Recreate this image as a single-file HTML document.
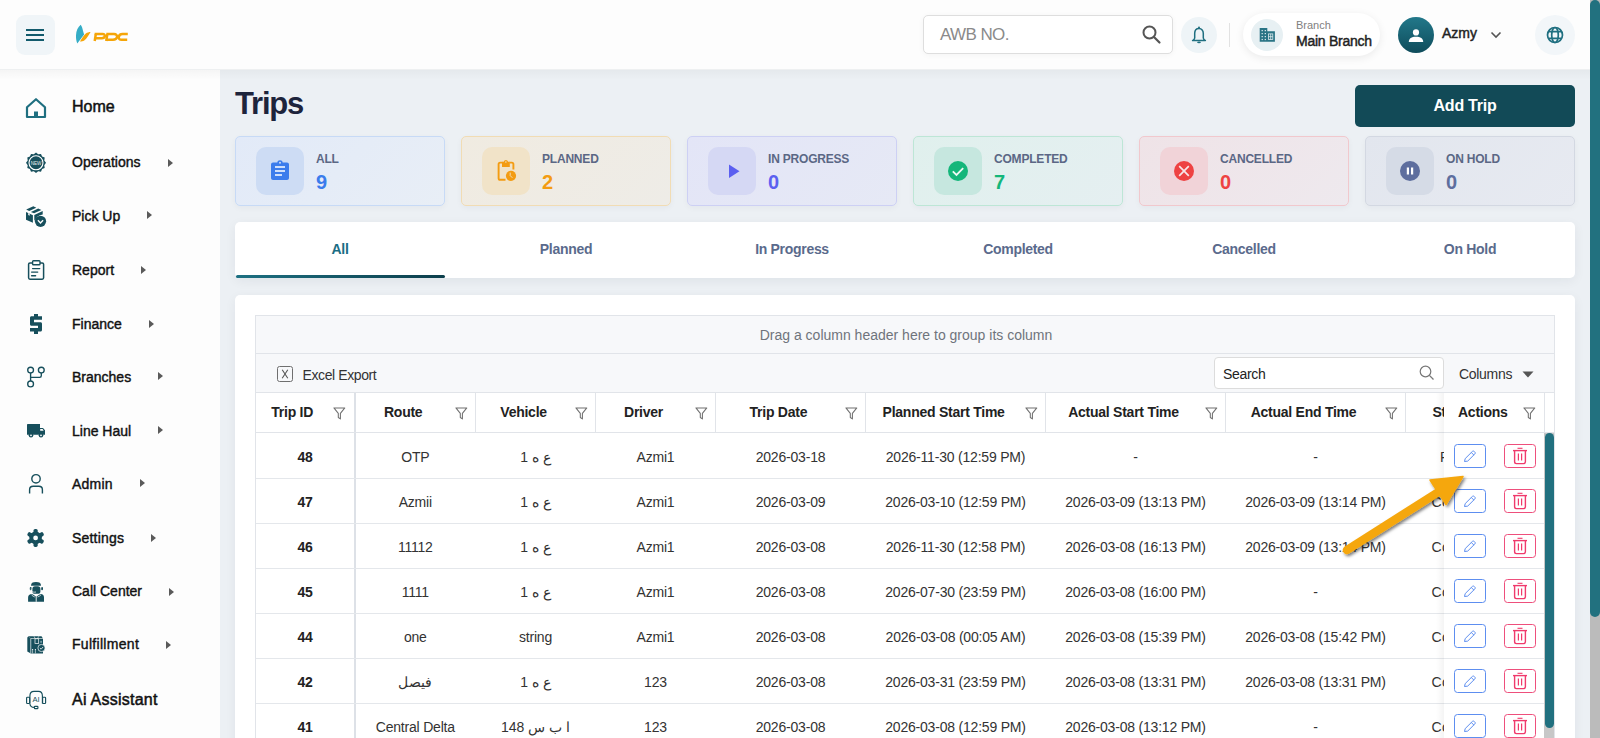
<!DOCTYPE html>
<html><head><meta charset="utf-8"><style>
*{box-sizing:border-box;margin:0;padding:0}
html,body{width:1600px;height:738px;overflow:hidden;background:#ecf0f4;font-family:"Liberation Sans",sans-serif;color:#222}
.t{position:absolute;white-space:nowrap}
.a{position:absolute}
svg{position:absolute;overflow:visible}
</style></head><body>
<div class="a" style="left:0;top:0;width:1600px;height:69px;background:#fdfdfd"></div>
<div class="a" style="left:0;top:69px;width:1600px;height:1px;background:#eef0f1"></div>
<div class="a" style="left:16px;top:15px;width:39px;height:40px;border-radius:9px;background:#f0f5f8"></div>
<div class="a" style="left:26px;top:29px;width:18px;height:2px;background:#125a6c"></div>
<div class="a" style="left:26px;top:34px;width:18px;height:2px;background:#125a6c"></div>
<div class="a" style="left:26px;top:39px;width:18px;height:2px;background:#125a6c"></div>
<svg style="left:72px;top:20px" width="60" height="28" viewBox="0 0 60 28">
<path d="M8.7 4.7 C9.8 6 10.6 8.5 11.2 11.5 C11.6 13 12 14 12.1 14.4 L5.3 23.5 C4.2 21 3.9 18 4 15.2 C4.2 10.5 6 7 8.7 4.7Z" fill="#35adc6"/>
<path d="M18.6 12.1 C17 12.2 15.2 12.5 13.8 13.6 C12.6 14.6 11.5 16 8 21.6 C9.5 21.6 11 21.3 12.3 20.5 C14.3 19.2 15.5 17 18.6 12.1Z" fill="#f5a508"/>
<g fill="none" stroke="#f5a508" stroke-width="2.5">
<path d="M23.8 14.1 L22.7 21"/><path d="M22.6 14.1 H30.6 C32.4 14.1 33.1 15.1 32.8 16.4 C32.5 17.6 31.6 18.2 30 18.2 H23.2"/>
<path d="M35.3 14.1 L34.3 21"/><path d="M34.3 14.1 H42 C44.3 14.1 45.4 15.4 45 17.3 C44.6 19.2 43.2 19.75 41 19.75 H33.6"/>
<path d="M55.8 14.1 H50.5 C48.2 14.1 47 15.4 46.8 17 C46.6 18.8 47.6 19.75 49.6 19.75 H55.2"/>
</g></svg>
<div class="a" style="left:923px;top:15px;width:250px;height:39px;border:1px solid #dedede;border-radius:5px;background:#fff;box-shadow:0 1px 6px rgba(0,0,0,0.04)"></div>
<div class="t" style="left:940px;top:26.11px;font-size:17px;line-height:17px;font-weight:normal;color:#8a8a8a;letter-spacing:-0.6px">AWB NO.</div>
<svg style="left:1142px;top:25px" width="20" height="20" viewBox="0 0 20 20"><circle cx="7.5" cy="7.5" r="6" fill="none" stroke="#555" stroke-width="2"/><path d="M12 12 L17.5 17.5" stroke="#555" stroke-width="2.2" stroke-linecap="round"/></svg>
<div class="a" style="left:1181px;top:17px;width:36px;height:36px;border-radius:50%;background:#eef4f7"></div>
<svg style="left:1188px;top:24px" width="22" height="22" viewBox="1188 24 22 22"><path d="M1199 28.6 C1196.3 28.6 1194.7 30.6 1194.7 33.6 V38 C1194.7 39 1193.8 39.8 1192.6 40.6 H1205.4 C1204.2 39.8 1203.3 39 1203.3 38 V33.6 C1203.3 30.6 1201.7 28.6 1199 28.6Z" fill="none" stroke="#1f6f80" stroke-width="1.5" stroke-linejoin="round"/><circle cx="1199" cy="27.6" r="1" fill="#1f6f80"/><ellipse cx="1199" cy="42.3" rx="1.9" ry="0.85" fill="#1f6f80"/></svg>
<div class="a" style="left:1229px;top:23px;width:1px;height:24px;background:#e2e2e2"></div>
<div class="a" style="left:1243px;top:13px;width:137px;height:43px;border-radius:22px;background:#fff;box-shadow:0 2px 8px rgba(0,0,0,0.08)"></div>
<div class="a" style="left:1251px;top:19px;width:32px;height:32px;border-radius:50%;background:#e7f0f3"></div>
<svg style="left:1258px;top:27px" width="18" height="16" viewBox="0 0 18 16"><path d="M1.7 1 H9.3 V4.2 H16.9 V14.8 H1.7Z" fill="#2a7485"/><g fill="#e7f0f3"><rect x="3.6" y="3.0" width="1.2" height="1.2"/><rect x="3.6" y="6.0" width="1.2" height="1.2"/><rect x="3.6" y="9.0" width="1.2" height="1.2"/><rect x="3.6" y="11.9" width="1.2" height="1.2"/><rect x="6.7" y="3.0" width="1.2" height="1.2"/><rect x="6.7" y="6.0" width="1.2" height="1.2"/><rect x="6.7" y="9.0" width="1.2" height="1.2"/><rect x="6.7" y="11.9" width="1.2" height="1.2"/></g><g fill="none" stroke="#e7f0f3" stroke-width="0.75"><rect x="10.6" y="6.9" width="4.2" height="5.6"/><path d="M12.7 6.9 V12.5 M10.6 9.7 H14.8"/></g></svg>
<div class="t" style="left:1296px;top:20.39px;font-size:11px;line-height:11px;font-weight:normal;color:#808080;">Branch</div>
<div class="t" style="left:1296px;top:33.85px;font-size:14px;line-height:14px;font-weight:normal;color:#222;letter-spacing:-0.25px;-webkit-text-stroke:0.45px #222">Main Branch</div>
<div class="a" style="left:1398px;top:17px;width:36px;height:36px;border-radius:50%;background:linear-gradient(#22788a,#0f4c5b)"></div>
<svg style="left:1405px;top:27px" width="22" height="16" viewBox="1405 27 22 16"><circle cx="1416" cy="32.4" r="3.1" fill="#fff"/><path d="M1408.8 42 C1408.8 38.6 1411.5 36.8 1416 36.8 C1420.5 36.8 1423.2 38.6 1423.2 42Z" fill="#fff"/></svg>
<div class="t" style="left:1442px;top:25.95px;font-size:14px;line-height:14px;font-weight:normal;color:#222;letter-spacing:0px;-webkit-text-stroke:0.45px #222">Azmy</div>
<svg style="left:1490px;top:31px" width="12" height="8" viewBox="0 0 12 8"><path d="M1.5 1.5 L6 6 L10.5 1.5" fill="none" stroke="#555" stroke-width="1.6"/></svg>
<div class="a" style="left:1535px;top:15px;width:40px;height:40px;border-radius:50%;background:#f2f6f9"></div>
<svg style="left:1544px;top:24px" width="22" height="22" viewBox="1544 24 22 22"><g fill="none" stroke="#1f6f80" stroke-width="1.7"><circle cx="1555" cy="35" r="7.5"/><ellipse cx="1555" cy="35" rx="3.3" ry="7.5"/><path d="M1548.3 31.6 H1561.7 M1548.3 38.4 H1561.7"/></g></svg>
<div class="a" style="left:0;top:70px;width:220px;height:668px;background:#fdfdfd"></div>
<div class="a" style="left:0;top:70px;width:1590px;height:10px;background:linear-gradient(rgba(0,0,0,0.03),rgba(0,0,0,0))"></div>
<div class="t" style="left:72px;top:99.46px;font-size:16px;line-height:16px;font-weight:normal;color:#111;letter-spacing:0px;-webkit-text-stroke:0.5px #111">Home</div>
<div class="t" style="left:72px;top:154.85px;font-size:14px;line-height:14px;font-weight:normal;color:#111;letter-spacing:0px;-webkit-text-stroke:0.4px #111">Operations</div>
<div class="a" style="left:168px;top:159.1px;width:0;height:0;border-top:4.5px solid transparent;border-bottom:4.5px solid transparent;border-left:5px solid #5a5a5a"></div>
<div class="t" style="left:72px;top:209.15px;font-size:14px;line-height:14px;font-weight:normal;color:#111;letter-spacing:0px;-webkit-text-stroke:0.4px #111">Pick Up</div>
<div class="a" style="left:146.5px;top:211.4px;width:0;height:0;border-top:4.5px solid transparent;border-bottom:4.5px solid transparent;border-left:5px solid #5a5a5a"></div>
<div class="t" style="left:72px;top:262.95px;font-size:14px;line-height:14px;font-weight:normal;color:#111;letter-spacing:0px;-webkit-text-stroke:0.4px #111">Report</div>
<div class="a" style="left:141px;top:265.5px;width:0;height:0;border-top:4.5px solid transparent;border-bottom:4.5px solid transparent;border-left:5px solid #5a5a5a"></div>
<div class="t" style="left:72px;top:316.85px;font-size:14px;line-height:14px;font-weight:normal;color:#111;letter-spacing:0px;-webkit-text-stroke:0.4px #111">Finance</div>
<div class="a" style="left:149px;top:319.5px;width:0;height:0;border-top:4.5px solid transparent;border-bottom:4.5px solid transparent;border-left:5px solid #5a5a5a"></div>
<div class="t" style="left:72px;top:369.95px;font-size:14px;line-height:14px;font-weight:normal;color:#111;letter-spacing:0px;-webkit-text-stroke:0.4px #111">Branches</div>
<div class="a" style="left:157.5px;top:372.3px;width:0;height:0;border-top:4.5px solid transparent;border-bottom:4.5px solid transparent;border-left:5px solid #5a5a5a"></div>
<div class="t" style="left:72px;top:424.15px;font-size:14px;line-height:14px;font-weight:normal;color:#111;letter-spacing:0px;-webkit-text-stroke:0.4px #111">Line Haul</div>
<div class="a" style="left:157.5px;top:426.0px;width:0;height:0;border-top:4.5px solid transparent;border-bottom:4.5px solid transparent;border-left:5px solid #5a5a5a"></div>
<div class="t" style="left:72px;top:477.15px;font-size:14px;line-height:14px;font-weight:normal;color:#111;letter-spacing:0.2px;-webkit-text-stroke:0.4px #111">Admin</div>
<div class="a" style="left:140px;top:479.3px;width:0;height:0;border-top:4.5px solid transparent;border-bottom:4.5px solid transparent;border-left:5px solid #5a5a5a"></div>
<div class="t" style="left:72px;top:530.55px;font-size:14px;line-height:14px;font-weight:normal;color:#111;letter-spacing:0.2px;-webkit-text-stroke:0.4px #111">Settings</div>
<div class="a" style="left:151px;top:533.5px;width:0;height:0;border-top:4.5px solid transparent;border-bottom:4.5px solid transparent;border-left:5px solid #5a5a5a"></div>
<div class="t" style="left:72px;top:584.45px;font-size:14px;line-height:14px;font-weight:normal;color:#111;letter-spacing:0px;-webkit-text-stroke:0.4px #111">Call Center</div>
<div class="a" style="left:169px;top:587.7px;width:0;height:0;border-top:4.5px solid transparent;border-bottom:4.5px solid transparent;border-left:5px solid #5a5a5a"></div>
<div class="t" style="left:72px;top:637.05px;font-size:14px;line-height:14px;font-weight:normal;color:#111;letter-spacing:0.3px;-webkit-text-stroke:0.4px #111">Fulfillment</div>
<div class="a" style="left:166px;top:640.5px;width:0;height:0;border-top:4.5px solid transparent;border-bottom:4.5px solid transparent;border-left:5px solid #5a5a5a"></div>
<div class="t" style="left:72px;top:691.96px;font-size:16px;line-height:16px;font-weight:normal;color:#111;letter-spacing:0.25px;-webkit-text-stroke:0.5px #111">Ai Assistant</div>
<svg style="left:25px;top:98px" width="22" height="21" viewBox="0 0 22 21"><path d="M2 9.2 L11 1.2 L20 9.2 V19 H2Z" fill="none" stroke="#1f6f80" stroke-width="2.2" stroke-linejoin="round"/><rect x="9" y="13.5" width="4" height="5.5" fill="#1f6f80"/></svg>
<svg style="left:25px;top:152px" width="22" height="22" viewBox="0 0 22 22"><path d="M11 0.5 L13.2 2.3 L16 1.9 L17.1 4.5 L19.7 5.6 L19.3 8.4 L21 10.8 L19.3 13.2 L19.7 16 L17.1 17.1 L16 19.7 L13.2 19.3 L11 21 L8.8 19.3 L6 19.7 L4.9 17.1 L2.3 16 L2.7 13.2 L1 10.8 L2.7 8.4 L2.3 5.6 L4.9 4.5 L6 1.9 L8.8 2.3Z" fill="#174f5c"/><circle cx="11" cy="10.8" r="7" fill="none" stroke="#fff" stroke-width="1.1"/><text x="11" y="12.6" text-anchor="middle" font-family="Liberation Sans" font-size="4.6" fill="#e8eef0">NEW</text></svg>
<svg style="left:21px;top:201px" width="30" height="30" viewBox="0 0 30 30"><path d="M5 11 L11.9 14.2 V21.8 L5 18.7Z" fill="#174f5c"/><path d="M7.2 12 L8.7 12.7 V14.8 L7.2 14.1Z" fill="#fdfdfd"/><path d="M5.2 8.6 L12.3 5.3 L15.3 6.7 L8.2 10Z" fill="#174f5c"/><path d="M9.9 10.9 L17.2 7.4 L20.4 8.9 L13.1 12.3Z" fill="#174f5c"/><path d="M13.3 14 L21.7 10.1 V13.6 C17.5 14.3 15 16.5 14.2 19.2 L13.3 19.6Z" fill="#174f5c"/><circle cx="19.5" cy="20.3" r="5.6" fill="#174f5c"/><path d="M16.9 19.3 L19.5 21.9 L22.1 19.3" stroke="#fdfdfd" stroke-width="1.4" fill="none"/></svg>
<svg style="left:21px;top:255px" width="30" height="30" viewBox="0 0 30 30"><rect x="7.6" y="7.9" width="15" height="16.3" rx="1.4" fill="none" stroke="#174f5c" stroke-width="1.5"/><rect x="11.6" y="5.7" width="7.4" height="4.1" rx="0.9" fill="#fdfdfd" stroke="#174f5c" stroke-width="1.4"/><path d="M11.6 13.6 H18.7 M10.6 17.1 H16.7 M10.6 20.7 H14.6" stroke="#174f5c" stroke-width="1.4" stroke-linecap="round"/></svg>
<svg style="left:21px;top:309px" width="30" height="30" viewBox="0 0 30 30"><path d="M13 5 H17 V7.3 H21 V10.8 H13 V13.2 H19.5 C20.4 13.2 21 13.8 21 14.7 V21.1 C21 22 20.4 22.6 19.5 22.6 H17 V25 H13 V22.6 H9 V19 H17 V16.8 H10.5 C9.6 16.8 9 16.2 9 15.3 V8.8 C9 7.9 9.6 7.3 10.5 7.3 H13Z" fill="#174f5c"/></svg>
<svg style="left:21px;top:362px" width="30" height="30" viewBox="0 0 30 30"><g fill="none" stroke="#174f5c" stroke-width="1.35"><circle cx="9.6" cy="8.1" r="2.9"/><circle cx="20.3" cy="8.1" r="2.9"/><circle cx="9.6" cy="21.9" r="2.9"/><path d="M9.6 11 V19 M20.3 11 V13.8 C20.3 14.8 19.7 15.3 18.7 15.3 H9.6"/></g></svg>
<svg style="left:21px;top:415px" width="30" height="30" viewBox="0 0 30 30"><path d="M7 9 H19 V13 H22 L24 15.3 V19.8 H6 V10 C6 9.4 6.4 9 7 9Z" fill="#174f5c"/><path d="M19.2 14 H21.6 L22.6 15.8 H19.2Z" fill="#fdfdfd"/><circle cx="10" cy="20.3" r="2.3" fill="#174f5c"/><circle cx="20" cy="20.3" r="2.3" fill="#174f5c"/><circle cx="10" cy="20.3" r="0.9" fill="#fdfdfd"/><circle cx="20" cy="20.3" r="0.9" fill="#fdfdfd"/></svg>
<svg style="left:21px;top:469px" width="30" height="30" viewBox="0 0 30 30"><g fill="none" stroke="#174f5c" stroke-width="1.4"><circle cx="15" cy="9.8" r="4.2"/><path d="M8.6 24.5 V20.8 C8.6 18.6 10 17.3 12.2 17.3 H17.8 C20 17.3 21.4 18.6 21.4 20.8 V24.5"/></g></svg>
<svg style="left:21px;top:523px" width="30" height="30" viewBox="0 0 30 30"><g fill="#174f5c"><circle cx="14.6" cy="14.9" r="6.3"/><rect x="12.5" y="5.9" width="4.2" height="5" rx="1.6" transform="rotate(0 14.6 14.9)"/><rect x="12.5" y="5.9" width="4.2" height="5" rx="1.6" transform="rotate(60 14.6 14.9)"/><rect x="12.5" y="5.9" width="4.2" height="5" rx="1.6" transform="rotate(120 14.6 14.9)"/><rect x="12.5" y="5.9" width="4.2" height="5" rx="1.6" transform="rotate(180 14.6 14.9)"/><rect x="12.5" y="5.9" width="4.2" height="5" rx="1.6" transform="rotate(240 14.6 14.9)"/><rect x="12.5" y="5.9" width="4.2" height="5" rx="1.6" transform="rotate(300 14.6 14.9)"/></g><circle cx="14.6" cy="14.9" r="2.4" fill="#fdfdfd"/></svg>
<svg style="left:22px;top:576px" width="30" height="30" viewBox="0 0 30 30"><path d="M9 9.7 C9 7 10.5 6 14 6 C17.5 6 19 7 19 9.7Z" fill="#174f5c"/><rect x="10.4" y="10.2" width="8" height="7.6" rx="2.6" fill="#174f5c"/><rect x="7.8" y="11" width="1.8" height="3.2" rx="0.9" fill="#174f5c"/><rect x="19.2" y="11" width="1.8" height="3.2" rx="0.9" fill="#174f5c"/><path d="M9.2 12.5 C9.2 16 11 16.5 14 16" stroke="#fdfdfd" stroke-width="0.7" fill="none"/><path d="M6.1 25.8 V21.5 C6.1 19.5 7.5 18 10 18 L12.5 19.5 L14.2 21 L16 19.5 L18.5 18 C21 18 22 19.5 22 21.5 V25.8Z" fill="#174f5c"/><path d="M14.2 21 V25.8" stroke="#fdfdfd" stroke-width="0.9"/><path d="M9.5 18.8 C10.5 20 11.5 20.5 12.8 21 M19 18.8 C18 20 17 20.5 15.6 21" stroke="#fdfdfd" stroke-width="0.7" fill="none"/></svg>
<svg style="left:22px;top:630px" width="30" height="30" viewBox="0 0 30 30"><path d="M5.3 7.5 L6.5 6.3 L8.8 8.5 V23.4 L5.3 21.5Z" fill="#174f5c"/><path d="M6.5 6.3 H19.5 L21 8.5 V23.4 H8.8 V8.5Z" fill="#174f5c"/><path d="M8.8 8.5 H21 M8.8 8.5 V23.4 M12 6.3 L13.2 8.5 M16.8 6.3 L15.5 8.5" stroke="#fdfdfd" stroke-width="0.6" fill="none"/><rect x="13" y="8.8" width="3.7" height="4.8" fill="none" stroke="#fdfdfd" stroke-width="0.7"/><circle cx="19.5" cy="18" r="3.6" fill="#174f5c" stroke="#fdfdfd" stroke-width="0.7"/><path d="M17.9 18 L19.1 19.2 L21.2 16.9" stroke="#fdfdfd" stroke-width="0.8" fill="none"/><path d="M10.6 19.5 V23.4 M13.4 19.5 V23.4" stroke="#fdfdfd" stroke-width="0.6"/><circle cx="10.6" cy="19.5" r="0.6" fill="#fdfdfd"/><circle cx="13.4" cy="19.5" r="0.6" fill="#fdfdfd"/><rect x="18.3" y="10.8" width="1.6" height="2" fill="#7fa3ab"/></svg>
<svg style="left:21px;top:683px" width="30" height="30" viewBox="0 0 30 30"><g fill="none" stroke="#174f5c" stroke-width="1.15"><path d="M8.9 20.5 V13 C8.9 10 10.5 8.4 13 8.4 H17.5 C20 8.4 21.4 10 21.4 13 V20.5"/><rect x="5.6" y="14.2" width="3" height="6.3" rx="0.8"/><rect x="21.6" y="14.2" width="3" height="6.3" rx="0.8"/><path d="M8.9 20.5 C9 23 11 24.4 13.3 24.4"/><rect x="13.4" y="23.3" width="3.5" height="2.3" rx="0.6"/></g><text x="15" y="18.9" text-anchor="middle" font-family="Liberation Sans" font-size="7.6" fill="#174f5c">AI</text></svg>
<div class="t" style="left:235px;top:87.66px;font-size:31px;line-height:31px;font-weight:bold;color:#1d243c;letter-spacing:-1.2px">Trips</div>
<div class="a" style="left:1355px;top:85px;width:220px;height:42px;border-radius:5px;background:#124a57"></div>
<div class="t" style="left:1165px;width:600px;text-align:center;top:98.06px;font-size:16px;line-height:16px;font-weight:bold;color:#fff;letter-spacing:-0.25px">Add Trip</div>
<div class="a" style="left:235px;top:136px;width:210px;height:70px;border:1px solid #c7daf6;border-radius:5px;background:linear-gradient(135deg,#e2eaf8,#e8eef6);box-shadow:0 2px 6px rgba(20,30,50,0.04)"></div>
<div class="a" style="left:256px;top:147px;width:48px;height:48px;border-radius:10px;background:#cddcf4"></div>
<div class="t" style="left:316px;top:152.64px;font-size:12px;line-height:12px;font-weight:bold;color:#5b6785;letter-spacing:-0.2px">ALL</div>
<div class="t" style="left:316px;top:171.57px;font-size:20px;line-height:20px;font-weight:bold;color:#3b7cec;">9</div>
<svg style="left:271px;top:160px" width="18" height="20" viewBox="0 0 18 20"><path d="M2 2.5 H6.3 C6.5 1 7.5 0.3 9 0.3 C10.5 0.3 11.5 1 11.7 2.5 H16 C17 2.5 18 3.3 18 4.5 V18 C18 19.2 17 20 16 20 H2 C1 20 0 19.2 0 18 V4.5 C0 3.3 1 2.5 2 2.5Z" fill="#3b7cec"/><circle cx="9" cy="2.8" r="1" fill="#cddcf4"/><path d="M4 7 H14 M4 11 H14 M4 15 H11" stroke="#fff" stroke-width="1.6"/></svg>
<div class="a" style="left:461px;top:136px;width:210px;height:70px;border:1px solid #f1dcb4;border-radius:5px;background:linear-gradient(135deg,#f0ebe1,#eeece7);box-shadow:0 2px 6px rgba(20,30,50,0.04)"></div>
<div class="a" style="left:482px;top:147px;width:48px;height:48px;border-radius:10px;background:#f1e3c8"></div>
<div class="t" style="left:542px;top:152.64px;font-size:12px;line-height:12px;font-weight:bold;color:#5b6785;letter-spacing:-0.2px">PLANNED</div>
<div class="t" style="left:542px;top:171.57px;font-size:20px;line-height:20px;font-weight:bold;color:#f39c12;">2</div>
<svg style="left:494px;top:157px" width="24" height="26" viewBox="494 157 24 26"><path d="M505.5 179.8 H500.2 C499.2 179.8 498.6 179.2 498.6 178.2 V164.2 C498.6 163.2 499.2 162.6 500.2 162.6 H502.5" fill="none" stroke="#f39c12" stroke-width="1.9"/><path d="M509.5 162.6 H511.8 C512.8 162.6 513.4 163.2 513.4 164.2 V169.5" fill="none" stroke="#f39c12" stroke-width="1.9"/><path d="M502 167 V161.8 H503.7 C503.9 160.7 504.8 159.9 505.9 159.9 C507 159.9 507.9 160.7 508.1 161.8 H509.8 V167Z" fill="#f39c12"/><circle cx="505.9" cy="162" r="0.75" fill="#f1e3c8"/><circle cx="511" cy="175.8" r="5.1" fill="#f39c12"/><path d="M510.2 172.6 V175.6 L512.4 177.8" stroke="#f1e3c8" stroke-width="0.9" fill="none"/></svg>
<div class="a" style="left:687px;top:136px;width:210px;height:70px;border:1px solid #cdd0f4;border-radius:5px;background:linear-gradient(135deg,#e3e5f7,#e6e9f5);box-shadow:0 2px 6px rgba(20,30,50,0.04)"></div>
<div class="a" style="left:708px;top:147px;width:48px;height:48px;border-radius:10px;background:#d5d8f4"></div>
<div class="t" style="left:768px;top:152.64px;font-size:12px;line-height:12px;font-weight:bold;color:#5b6785;letter-spacing:-0.2px">IN PROGRESS</div>
<div class="t" style="left:768px;top:171.57px;font-size:20px;line-height:20px;font-weight:bold;color:#5b5ff0;">0</div>
<svg style="left:728px;top:163.5px" width="12" height="15" viewBox="0 0 12 15"><path d="M1 0.5 L11.5 7.2 L1 14Z" fill="#5b5ff0"/></svg>
<div class="a" style="left:913px;top:136px;width:210px;height:70px;border:1px solid #bde6d6;border-radius:5px;background:linear-gradient(135deg,#e0f0ed,#e5eff1);box-shadow:0 2px 6px rgba(20,30,50,0.04)"></div>
<div class="a" style="left:934px;top:147px;width:48px;height:48px;border-radius:10px;background:#c6e7df"></div>
<div class="t" style="left:994px;top:152.64px;font-size:12px;line-height:12px;font-weight:bold;color:#5b6785;letter-spacing:-0.2px">COMPLETED</div>
<div class="t" style="left:994px;top:171.57px;font-size:20px;line-height:20px;font-weight:bold;color:#14b67a;">7</div>
<svg style="left:948px;top:161px" width="20" height="20" viewBox="0 0 20 20"><circle cx="10" cy="10" r="10" fill="#14b67a"/><path d="M4.8 10.3 L8.5 14 L15.2 7.2" fill="none" stroke="#eef8f4" stroke-width="1.8"/></svg>
<div class="a" style="left:1139px;top:136px;width:210px;height:70px;border:1px solid #f1c8cd;border-radius:5px;background:linear-gradient(135deg,#efe3e7,#eee9ee);box-shadow:0 2px 6px rgba(20,30,50,0.04)"></div>
<div class="a" style="left:1160px;top:147px;width:48px;height:48px;border-radius:10px;background:#f1d3d8"></div>
<div class="t" style="left:1220px;top:152.64px;font-size:12px;line-height:12px;font-weight:bold;color:#5b6785;letter-spacing:-0.2px">CANCELLED</div>
<div class="t" style="left:1220px;top:171.57px;font-size:20px;line-height:20px;font-weight:bold;color:#ee4242;">0</div>
<svg style="left:1174px;top:161px" width="20" height="20" viewBox="0 0 20 20"><circle cx="10" cy="10" r="10" fill="#ee4242"/><path d="M5.2 5.2 L14.8 14.8 M14.8 5.2 L5.2 14.8" fill="none" stroke="#f6e6e8" stroke-width="1.7"/></svg>
<div class="a" style="left:1365px;top:136px;width:210px;height:70px;border:1px solid #d3d8e2;border-radius:5px;background:linear-gradient(135deg,#e2e6ee,#e7eaf1);box-shadow:0 2px 6px rgba(20,30,50,0.04)"></div>
<div class="a" style="left:1386px;top:147px;width:48px;height:48px;border-radius:10px;background:#d5dbe6"></div>
<div class="t" style="left:1446px;top:152.64px;font-size:12px;line-height:12px;font-weight:bold;color:#5b6785;letter-spacing:-0.2px">ON HOLD</div>
<div class="t" style="left:1446px;top:171.57px;font-size:20px;line-height:20px;font-weight:bold;color:#5e6e9e;">0</div>
<svg style="left:1400px;top:161px" width="20" height="20" viewBox="0 0 20 20"><circle cx="10" cy="10" r="10" fill="#5e6e9e"/><path d="M7.9 6.5 V13.5 M12.1 6.5 V13.5" fill="none" stroke="#fff" stroke-width="2.2"/></svg>
<div class="a" style="left:235px;top:222px;width:1340px;height:56px;border-radius:5px;background:#fff;box-shadow:0 3px 12px rgba(20,30,50,0.06)"></div>
<div class="t" style="left:40px;width:600px;text-align:center;top:241.85px;font-size:14px;line-height:14px;font-weight:bold;color:#1a6d84;letter-spacing:-0.3px">All</div>
<div class="t" style="left:266px;width:600px;text-align:center;top:241.85px;font-size:14px;line-height:14px;font-weight:bold;color:#5a6a8c;letter-spacing:-0.3px">Planned</div>
<div class="t" style="left:492px;width:600px;text-align:center;top:241.85px;font-size:14px;line-height:14px;font-weight:bold;color:#5a6a8c;letter-spacing:-0.3px">In Progress</div>
<div class="t" style="left:718px;width:600px;text-align:center;top:241.85px;font-size:14px;line-height:14px;font-weight:bold;color:#5a6a8c;letter-spacing:-0.3px">Completed</div>
<div class="t" style="left:944px;width:600px;text-align:center;top:241.85px;font-size:14px;line-height:14px;font-weight:bold;color:#5a6a8c;letter-spacing:-0.3px">Cancelled</div>
<div class="t" style="left:1170px;width:600px;text-align:center;top:241.85px;font-size:14px;line-height:14px;font-weight:bold;color:#5a6a8c;letter-spacing:-0.3px">On Hold</div>
<div class="a" style="left:235.5px;top:275px;width:209.5px;height:3px;background:linear-gradient(90deg,#1d7082,#0d3f4c);border-radius:2px"></div>
<div class="a" style="left:235px;top:295px;width:1340px;height:460px;border-radius:5px;background:#fff;box-shadow:0 3px 12px rgba(20,30,50,0.06)"></div>
<div class="a" style="left:255px;top:315px;width:1300px;height:430px;border:1px solid #e1e4e9;background:#fff"></div>
<div class="a" style="left:256px;top:316px;width:1298px;height:76px;background:#f7f8fa"></div>
<div class="a" style="left:256px;top:353px;width:1298px;height:1px;background:#e1e4e9"></div>
<div class="a" style="left:256px;top:392px;width:1298px;height:1px;background:#e1e4e9"></div>
<div class="t" style="left:606px;width:600px;text-align:center;top:328.15px;font-size:14px;line-height:14px;font-weight:normal;color:#6f747c;">Drag a column header here to group its column</div>
<svg style="left:277px;top:366px" width="16" height="16" viewBox="0 0 16 16"><rect x="0.5" y="0.5" width="15" height="15" rx="2" fill="none" stroke="#6f6f6f" stroke-width="1"/><path d="M5.2 3.8 L10.8 12.2 M10.8 3.8 L5.2 12.2" stroke="#555" stroke-width="1.1"/></svg>
<div class="t" style="left:302.5px;top:367.55px;font-size:14px;line-height:14px;font-weight:normal;color:#333;letter-spacing:-0.4px">Excel Export</div>
<div class="a" style="left:1214px;top:357px;width:230px;height:32px;border:1px solid #dcdcdc;border-radius:4px;background:#fff"></div>
<div class="t" style="left:1223px;top:366.95px;font-size:14px;line-height:14px;font-weight:normal;color:#222;letter-spacing:-0.3px">Search</div>
<svg style="left:1419px;top:365px" width="16" height="16" viewBox="0 0 16 16"><circle cx="6.5" cy="6.5" r="5.3" fill="none" stroke="#777" stroke-width="1.2"/><path d="M10.4 10.4 L14.5 14.5" stroke="#777" stroke-width="1.3"/></svg>
<div class="t" style="left:1459px;top:366.95px;font-size:14px;line-height:14px;font-weight:normal;color:#333;letter-spacing:-0.3px">Columns</div>
<svg style="left:1522px;top:371px" width="12" height="8" viewBox="0 0 12 8"><path d="M0.5 0.5 L11.5 0.5 L6 6.5Z" fill="#555"/></svg>
<div class="t" style="left:-7.800000000000011px;width:600px;text-align:center;top:404.85px;font-size:14px;line-height:14px;font-weight:bold;color:#222;letter-spacing:-0.25px">Trip ID</div>
<div class="t" style="left:103.19999999999999px;width:600px;text-align:center;top:404.85px;font-size:14px;line-height:14px;font-weight:bold;color:#222;letter-spacing:-0.25px">Route</div>
<div class="t" style="left:223.60000000000002px;width:600px;text-align:center;top:404.85px;font-size:14px;line-height:14px;font-weight:bold;color:#222;letter-spacing:-0.25px">Vehicle</div>
<div class="t" style="left:343.5px;width:600px;text-align:center;top:404.85px;font-size:14px;line-height:14px;font-weight:bold;color:#222;letter-spacing:-0.25px">Driver</div>
<div class="t" style="left:478.4px;width:600px;text-align:center;top:404.85px;font-size:14px;line-height:14px;font-weight:bold;color:#222;letter-spacing:-0.25px">Trip Date</div>
<div class="t" style="left:643.6px;width:600px;text-align:center;top:404.85px;font-size:14px;line-height:14px;font-weight:bold;color:#222;letter-spacing:-0.25px">Planned Start Time</div>
<div class="t" style="left:823.5px;width:600px;text-align:center;top:404.85px;font-size:14px;line-height:14px;font-weight:bold;color:#222;letter-spacing:-0.25px">Actual Start Time</div>
<div class="t" style="left:1003.5px;width:600px;text-align:center;top:404.85px;font-size:14px;line-height:14px;font-weight:bold;color:#222;letter-spacing:-0.25px">Actual End Time</div>
<svg style="left:333px;top:406.5px" width="13" height="13" viewBox="0 0 13 13"><path d="M0.9 0.9 H11.8 L7.4 6.3 V11.9 L5.3 10.5 V6.3Z" fill="none" stroke="#707070" stroke-width="1.05" stroke-linejoin="round"/></svg>
<svg style="left:455px;top:406.5px" width="13" height="13" viewBox="0 0 13 13"><path d="M0.9 0.9 H11.8 L7.4 6.3 V11.9 L5.3 10.5 V6.3Z" fill="none" stroke="#707070" stroke-width="1.05" stroke-linejoin="round"/></svg>
<svg style="left:574.5px;top:406.5px" width="13" height="13" viewBox="0 0 13 13"><path d="M0.9 0.9 H11.8 L7.4 6.3 V11.9 L5.3 10.5 V6.3Z" fill="none" stroke="#707070" stroke-width="1.05" stroke-linejoin="round"/></svg>
<svg style="left:695px;top:406.5px" width="13" height="13" viewBox="0 0 13 13"><path d="M0.9 0.9 H11.8 L7.4 6.3 V11.9 L5.3 10.5 V6.3Z" fill="none" stroke="#707070" stroke-width="1.05" stroke-linejoin="round"/></svg>
<svg style="left:845px;top:406.5px" width="13" height="13" viewBox="0 0 13 13"><path d="M0.9 0.9 H11.8 L7.4 6.3 V11.9 L5.3 10.5 V6.3Z" fill="none" stroke="#707070" stroke-width="1.05" stroke-linejoin="round"/></svg>
<svg style="left:1025px;top:406.5px" width="13" height="13" viewBox="0 0 13 13"><path d="M0.9 0.9 H11.8 L7.4 6.3 V11.9 L5.3 10.5 V6.3Z" fill="none" stroke="#707070" stroke-width="1.05" stroke-linejoin="round"/></svg>
<svg style="left:1205px;top:406.5px" width="13" height="13" viewBox="0 0 13 13"><path d="M0.9 0.9 H11.8 L7.4 6.3 V11.9 L5.3 10.5 V6.3Z" fill="none" stroke="#707070" stroke-width="1.05" stroke-linejoin="round"/></svg>
<svg style="left:1385px;top:406.5px" width="13" height="13" viewBox="0 0 13 13"><path d="M0.9 0.9 H11.8 L7.4 6.3 V11.9 L5.3 10.5 V6.3Z" fill="none" stroke="#707070" stroke-width="1.05" stroke-linejoin="round"/></svg>
<div class="a" style="left:1406px;top:393px;width:38px;height:40px;overflow:hidden"><div class="t" style="left:26.5px;top:11.85px;font-size:14px;line-height:14px;font-weight:bold;color:#222;letter-spacing:-0.25px">Status</div></div>
<div class="a" style="left:354px;top:393px;width:2px;height:40px;background:#dde1e7"></div>
<div class="a" style="left:475px;top:393px;width:1px;height:40px;background:#e1e4e9"></div>
<div class="a" style="left:595px;top:393px;width:1px;height:40px;background:#e1e4e9"></div>
<div class="a" style="left:715px;top:393px;width:1px;height:40px;background:#e1e4e9"></div>
<div class="a" style="left:865px;top:393px;width:1px;height:40px;background:#e1e4e9"></div>
<div class="a" style="left:1045px;top:393px;width:1px;height:40px;background:#e1e4e9"></div>
<div class="a" style="left:1225px;top:393px;width:1px;height:40px;background:#e1e4e9"></div>
<div class="a" style="left:1405px;top:393px;width:1px;height:40px;background:#e1e4e9"></div>
<div class="a" style="left:354px;top:433px;width:2px;height:305px;background:#dde1e7"></div>
<div class="a" style="left:256px;top:432px;width:1298px;height:1px;background:#e1e4e9"></div>
<div class="a" style="left:256px;top:478px;width:1298px;height:1px;background:#e4e7eb"></div>
<div class="t" style="left:5px;width:600px;text-align:center;top:450.15px;font-size:14px;line-height:14px;font-weight:bold;color:#222;letter-spacing:-0.2px">48</div>
<div class="t" style="left:115.30000000000001px;width:600px;text-align:center;top:450.15px;font-size:14px;line-height:14px;font-weight:normal;color:#333;letter-spacing:-0.2px">OTP</div>
<div class="t" style="left:235.5px;width:600px;text-align:center;top:450.15px;font-size:14px;line-height:14px;font-weight:normal;color:#333;letter-spacing:-0.2px;direction:rtl;unicode-bidi:plaintext">ع ه 1</div>
<div class="t" style="left:355.5px;width:600px;text-align:center;top:450.15px;font-size:14px;line-height:14px;font-weight:normal;color:#333;letter-spacing:-0.2px">Azmi1</div>
<div class="t" style="left:490.5px;width:600px;text-align:center;top:450.15px;font-size:14px;line-height:14px;font-weight:normal;color:#333;letter-spacing:-0.2px">2026-03-18</div>
<div class="t" style="left:655.5px;width:600px;text-align:center;top:450.15px;font-size:14px;line-height:14px;font-weight:normal;color:#333;letter-spacing:-0.2px">2026-11-30 (12:59 PM)</div>
<div class="t" style="left:835.5px;width:600px;text-align:center;top:450.15px;font-size:14px;line-height:14px;font-weight:normal;color:#333;letter-spacing:-0.2px">-</div>
<div class="t" style="left:1015.5px;width:600px;text-align:center;top:450.15px;font-size:14px;line-height:14px;font-weight:normal;color:#333;letter-spacing:-0.2px">-</div>
<div class="a" style="left:1406px;top:433px;width:38px;height:44px;overflow:hidden"><div class="t" style="left:34px;top:17.15px;font-size:14px;line-height:14px;font-weight:normal;color:#333;letter-spacing:0.3px">Planned</div></div>
<div class="a" style="left:256px;top:523px;width:1298px;height:1px;background:#e4e7eb"></div>
<div class="t" style="left:5px;width:600px;text-align:center;top:495.15px;font-size:14px;line-height:14px;font-weight:bold;color:#222;letter-spacing:-0.2px">47</div>
<div class="t" style="left:115.30000000000001px;width:600px;text-align:center;top:495.15px;font-size:14px;line-height:14px;font-weight:normal;color:#333;letter-spacing:-0.2px">Azmii</div>
<div class="t" style="left:235.5px;width:600px;text-align:center;top:495.15px;font-size:14px;line-height:14px;font-weight:normal;color:#333;letter-spacing:-0.2px;direction:rtl;unicode-bidi:plaintext">ع ه 1</div>
<div class="t" style="left:355.5px;width:600px;text-align:center;top:495.15px;font-size:14px;line-height:14px;font-weight:normal;color:#333;letter-spacing:-0.2px">Azmi1</div>
<div class="t" style="left:490.5px;width:600px;text-align:center;top:495.15px;font-size:14px;line-height:14px;font-weight:normal;color:#333;letter-spacing:-0.2px">2026-03-09</div>
<div class="t" style="left:655.5px;width:600px;text-align:center;top:495.15px;font-size:14px;line-height:14px;font-weight:normal;color:#333;letter-spacing:-0.2px">2026-03-10 (12:59 PM)</div>
<div class="t" style="left:835.5px;width:600px;text-align:center;top:495.15px;font-size:14px;line-height:14px;font-weight:normal;color:#333;letter-spacing:-0.2px">2026-03-09 (13:13 PM)</div>
<div class="t" style="left:1015.5px;width:600px;text-align:center;top:495.15px;font-size:14px;line-height:14px;font-weight:normal;color:#333;letter-spacing:-0.2px">2026-03-09 (13:14 PM)</div>
<div class="a" style="left:1406px;top:478px;width:38px;height:44px;overflow:hidden"><div class="t" style="left:25.5px;top:17.15px;font-size:14px;line-height:14px;font-weight:normal;color:#333;letter-spacing:0.3px">Completed</div></div>
<div class="a" style="left:256px;top:568px;width:1298px;height:1px;background:#e4e7eb"></div>
<div class="t" style="left:5px;width:600px;text-align:center;top:540.15px;font-size:14px;line-height:14px;font-weight:bold;color:#222;letter-spacing:-0.2px">46</div>
<div class="t" style="left:115.30000000000001px;width:600px;text-align:center;top:540.15px;font-size:14px;line-height:14px;font-weight:normal;color:#333;letter-spacing:-0.2px">11112</div>
<div class="t" style="left:235.5px;width:600px;text-align:center;top:540.15px;font-size:14px;line-height:14px;font-weight:normal;color:#333;letter-spacing:-0.2px;direction:rtl;unicode-bidi:plaintext">ع ه 1</div>
<div class="t" style="left:355.5px;width:600px;text-align:center;top:540.15px;font-size:14px;line-height:14px;font-weight:normal;color:#333;letter-spacing:-0.2px">Azmi1</div>
<div class="t" style="left:490.5px;width:600px;text-align:center;top:540.15px;font-size:14px;line-height:14px;font-weight:normal;color:#333;letter-spacing:-0.2px">2026-03-08</div>
<div class="t" style="left:655.5px;width:600px;text-align:center;top:540.15px;font-size:14px;line-height:14px;font-weight:normal;color:#333;letter-spacing:-0.2px">2026-11-30 (12:58 PM)</div>
<div class="t" style="left:835.5px;width:600px;text-align:center;top:540.15px;font-size:14px;line-height:14px;font-weight:normal;color:#333;letter-spacing:-0.2px">2026-03-08 (16:13 PM)</div>
<div class="t" style="left:1015.5px;width:600px;text-align:center;top:540.15px;font-size:14px;line-height:14px;font-weight:normal;color:#333;letter-spacing:-0.2px">2026-03-09 (13:14 PM)</div>
<div class="a" style="left:1406px;top:523px;width:38px;height:44px;overflow:hidden"><div class="t" style="left:25.5px;top:17.15px;font-size:14px;line-height:14px;font-weight:normal;color:#333;letter-spacing:0.3px">Completed</div></div>
<div class="a" style="left:256px;top:613px;width:1298px;height:1px;background:#e4e7eb"></div>
<div class="t" style="left:5px;width:600px;text-align:center;top:585.15px;font-size:14px;line-height:14px;font-weight:bold;color:#222;letter-spacing:-0.2px">45</div>
<div class="t" style="left:115.30000000000001px;width:600px;text-align:center;top:585.15px;font-size:14px;line-height:14px;font-weight:normal;color:#333;letter-spacing:-0.2px">1111</div>
<div class="t" style="left:235.5px;width:600px;text-align:center;top:585.15px;font-size:14px;line-height:14px;font-weight:normal;color:#333;letter-spacing:-0.2px;direction:rtl;unicode-bidi:plaintext">ع ه 1</div>
<div class="t" style="left:355.5px;width:600px;text-align:center;top:585.15px;font-size:14px;line-height:14px;font-weight:normal;color:#333;letter-spacing:-0.2px">Azmi1</div>
<div class="t" style="left:490.5px;width:600px;text-align:center;top:585.15px;font-size:14px;line-height:14px;font-weight:normal;color:#333;letter-spacing:-0.2px">2026-03-08</div>
<div class="t" style="left:655.5px;width:600px;text-align:center;top:585.15px;font-size:14px;line-height:14px;font-weight:normal;color:#333;letter-spacing:-0.2px">2026-07-30 (23:59 PM)</div>
<div class="t" style="left:835.5px;width:600px;text-align:center;top:585.15px;font-size:14px;line-height:14px;font-weight:normal;color:#333;letter-spacing:-0.2px">2026-03-08 (16:00 PM)</div>
<div class="t" style="left:1015.5px;width:600px;text-align:center;top:585.15px;font-size:14px;line-height:14px;font-weight:normal;color:#333;letter-spacing:-0.2px">-</div>
<div class="a" style="left:1406px;top:568px;width:38px;height:44px;overflow:hidden"><div class="t" style="left:25.5px;top:17.15px;font-size:14px;line-height:14px;font-weight:normal;color:#333;letter-spacing:0.3px">Completed</div></div>
<div class="a" style="left:256px;top:658px;width:1298px;height:1px;background:#e4e7eb"></div>
<div class="t" style="left:5px;width:600px;text-align:center;top:630.15px;font-size:14px;line-height:14px;font-weight:bold;color:#222;letter-spacing:-0.2px">44</div>
<div class="t" style="left:115.30000000000001px;width:600px;text-align:center;top:630.15px;font-size:14px;line-height:14px;font-weight:normal;color:#333;letter-spacing:-0.2px">one</div>
<div class="t" style="left:235.5px;width:600px;text-align:center;top:630.15px;font-size:14px;line-height:14px;font-weight:normal;color:#333;letter-spacing:-0.2px">string</div>
<div class="t" style="left:355.5px;width:600px;text-align:center;top:630.15px;font-size:14px;line-height:14px;font-weight:normal;color:#333;letter-spacing:-0.2px">Azmi1</div>
<div class="t" style="left:490.5px;width:600px;text-align:center;top:630.15px;font-size:14px;line-height:14px;font-weight:normal;color:#333;letter-spacing:-0.2px">2026-03-08</div>
<div class="t" style="left:655.5px;width:600px;text-align:center;top:630.15px;font-size:14px;line-height:14px;font-weight:normal;color:#333;letter-spacing:-0.2px">2026-03-08 (00:05 AM)</div>
<div class="t" style="left:835.5px;width:600px;text-align:center;top:630.15px;font-size:14px;line-height:14px;font-weight:normal;color:#333;letter-spacing:-0.2px">2026-03-08 (15:39 PM)</div>
<div class="t" style="left:1015.5px;width:600px;text-align:center;top:630.15px;font-size:14px;line-height:14px;font-weight:normal;color:#333;letter-spacing:-0.2px">2026-03-08 (15:42 PM)</div>
<div class="a" style="left:1406px;top:613px;width:38px;height:44px;overflow:hidden"><div class="t" style="left:25.5px;top:17.15px;font-size:14px;line-height:14px;font-weight:normal;color:#333;letter-spacing:0.3px">Completed</div></div>
<div class="a" style="left:256px;top:703px;width:1298px;height:1px;background:#e4e7eb"></div>
<div class="t" style="left:5px;width:600px;text-align:center;top:675.15px;font-size:14px;line-height:14px;font-weight:bold;color:#222;letter-spacing:-0.2px">42</div>
<div class="t" style="left:115.30000000000001px;width:600px;text-align:center;top:675.15px;font-size:14px;line-height:14px;font-weight:normal;color:#333;letter-spacing:-0.2px;direction:rtl;unicode-bidi:plaintext">فيصل</div>
<div class="t" style="left:235.5px;width:600px;text-align:center;top:675.15px;font-size:14px;line-height:14px;font-weight:normal;color:#333;letter-spacing:-0.2px;direction:rtl;unicode-bidi:plaintext">ع ه 1</div>
<div class="t" style="left:355.5px;width:600px;text-align:center;top:675.15px;font-size:14px;line-height:14px;font-weight:normal;color:#333;letter-spacing:-0.2px">123</div>
<div class="t" style="left:490.5px;width:600px;text-align:center;top:675.15px;font-size:14px;line-height:14px;font-weight:normal;color:#333;letter-spacing:-0.2px">2026-03-08</div>
<div class="t" style="left:655.5px;width:600px;text-align:center;top:675.15px;font-size:14px;line-height:14px;font-weight:normal;color:#333;letter-spacing:-0.2px">2026-03-31 (23:59 PM)</div>
<div class="t" style="left:835.5px;width:600px;text-align:center;top:675.15px;font-size:14px;line-height:14px;font-weight:normal;color:#333;letter-spacing:-0.2px">2026-03-08 (13:31 PM)</div>
<div class="t" style="left:1015.5px;width:600px;text-align:center;top:675.15px;font-size:14px;line-height:14px;font-weight:normal;color:#333;letter-spacing:-0.2px">2026-03-08 (13:31 PM)</div>
<div class="a" style="left:1406px;top:658px;width:38px;height:44px;overflow:hidden"><div class="t" style="left:25.5px;top:17.15px;font-size:14px;line-height:14px;font-weight:normal;color:#333;letter-spacing:0.3px">Completed</div></div>
<div class="t" style="left:5px;width:600px;text-align:center;top:720.15px;font-size:14px;line-height:14px;font-weight:bold;color:#222;letter-spacing:-0.2px">41</div>
<div class="t" style="left:115.30000000000001px;width:600px;text-align:center;top:720.15px;font-size:14px;line-height:14px;font-weight:normal;color:#333;letter-spacing:-0.2px">Central Delta</div>
<div class="t" style="left:235.5px;width:600px;text-align:center;top:720.15px;font-size:14px;line-height:14px;font-weight:normal;color:#333;letter-spacing:-0.2px;direction:rtl;unicode-bidi:plaintext">ا ب س 148</div>
<div class="t" style="left:355.5px;width:600px;text-align:center;top:720.15px;font-size:14px;line-height:14px;font-weight:normal;color:#333;letter-spacing:-0.2px">123</div>
<div class="t" style="left:490.5px;width:600px;text-align:center;top:720.15px;font-size:14px;line-height:14px;font-weight:normal;color:#333;letter-spacing:-0.2px">2026-03-08</div>
<div class="t" style="left:655.5px;width:600px;text-align:center;top:720.15px;font-size:14px;line-height:14px;font-weight:normal;color:#333;letter-spacing:-0.2px">2026-03-08 (12:59 PM)</div>
<div class="t" style="left:835.5px;width:600px;text-align:center;top:720.15px;font-size:14px;line-height:14px;font-weight:normal;color:#333;letter-spacing:-0.2px">2026-03-08 (13:12 PM)</div>
<div class="t" style="left:1015.5px;width:600px;text-align:center;top:720.15px;font-size:14px;line-height:14px;font-weight:normal;color:#333;letter-spacing:-0.2px">-</div>
<div class="a" style="left:1406px;top:703px;width:38px;height:44px;overflow:hidden"><div class="t" style="left:25.5px;top:17.15px;font-size:14px;line-height:14px;font-weight:normal;color:#333;letter-spacing:0.3px">Completed</div></div>
<div class="a" style="left:1436px;top:393px;width:8px;height:345px;background:linear-gradient(90deg,rgba(0,0,0,0),rgba(0,0,0,0.045))"></div>
<div class="a" style="left:1444px;top:393px;width:101px;height:345px;background:#fff"></div>
<div class="t" style="left:1182.8px;width:600px;text-align:center;top:404.85px;font-size:14px;line-height:14px;font-weight:bold;color:#222;letter-spacing:-0.25px">Actions</div>
<svg style="left:1523px;top:406.5px" width="13" height="13" viewBox="0 0 13 13"><path d="M0.9 0.9 H11.8 L7.4 6.3 V11.9 L5.3 10.5 V6.3Z" fill="none" stroke="#707070" stroke-width="1.05" stroke-linejoin="round"/></svg>
<div class="a" style="left:1444px;top:432px;width:101px;height:1px;background:#e1e4e9"></div>
<div class="a" style="left:1544px;top:393px;width:1px;height:40px;background:#e1e4e9"></div>
<div class="a" style="left:1444px;top:478px;width:100px;height:1px;background:#e4e7eb"></div>
<div class="a" style="left:1454px;top:444px;width:32px;height:24px;border:1px solid #5d8ef0;border-radius:3.5px;background:#fff"></div>
<svg style="left:1463px;top:450px" width="14" height="13" viewBox="0 0 14 13"><path d="M1.5 11.5 L2.2 8.6 L9.3 1.5 C9.9 0.9 10.7 0.9 11.3 1.5 L11.8 2 C12.4 2.6 12.4 3.4 11.8 4 L4.7 11.1Z M8.3 2.5 L10.9 5.1" fill="none" stroke="#5d8ef0" stroke-width="1"/></svg>
<div class="a" style="left:1504px;top:444px;width:32px;height:24px;border:1px solid #ee4f7c;border-radius:3.5px;background:#fff"></div>
<svg style="left:1510px;top:446px" width="20" height="20" viewBox="0 0 20 20"><path d="M7.5 2.3 H12.5" stroke="#f03a6c" stroke-width="1.1"/><path d="M3 4.6 H17" stroke="#f03a6c" stroke-width="1.4"/><path d="M4.6 4.6 V15.8 C4.6 16.9 5.3 17.6 6.4 17.6 H13.6 C14.7 17.6 15.4 16.9 15.4 15.8 V4.6" fill="none" stroke="#f03a6c" stroke-width="1.4"/><path d="M8.4 7.4 V14.4 M11.6 7.4 V14.4" stroke="#f03a6c" stroke-width="1.2"/></svg>
<div class="a" style="left:1444px;top:523px;width:100px;height:1px;background:#e4e7eb"></div>
<div class="a" style="left:1454px;top:489px;width:32px;height:24px;border:1px solid #5d8ef0;border-radius:3.5px;background:#fff"></div>
<svg style="left:1463px;top:495px" width="14" height="13" viewBox="0 0 14 13"><path d="M1.5 11.5 L2.2 8.6 L9.3 1.5 C9.9 0.9 10.7 0.9 11.3 1.5 L11.8 2 C12.4 2.6 12.4 3.4 11.8 4 L4.7 11.1Z M8.3 2.5 L10.9 5.1" fill="none" stroke="#5d8ef0" stroke-width="1"/></svg>
<div class="a" style="left:1504px;top:489px;width:32px;height:24px;border:1px solid #ee4f7c;border-radius:3.5px;background:#fff"></div>
<svg style="left:1510px;top:491px" width="20" height="20" viewBox="0 0 20 20"><path d="M7.5 2.3 H12.5" stroke="#f03a6c" stroke-width="1.1"/><path d="M3 4.6 H17" stroke="#f03a6c" stroke-width="1.4"/><path d="M4.6 4.6 V15.8 C4.6 16.9 5.3 17.6 6.4 17.6 H13.6 C14.7 17.6 15.4 16.9 15.4 15.8 V4.6" fill="none" stroke="#f03a6c" stroke-width="1.4"/><path d="M8.4 7.4 V14.4 M11.6 7.4 V14.4" stroke="#f03a6c" stroke-width="1.2"/></svg>
<div class="a" style="left:1444px;top:568px;width:100px;height:1px;background:#e4e7eb"></div>
<div class="a" style="left:1454px;top:534px;width:32px;height:24px;border:1px solid #5d8ef0;border-radius:3.5px;background:#fff"></div>
<svg style="left:1463px;top:540px" width="14" height="13" viewBox="0 0 14 13"><path d="M1.5 11.5 L2.2 8.6 L9.3 1.5 C9.9 0.9 10.7 0.9 11.3 1.5 L11.8 2 C12.4 2.6 12.4 3.4 11.8 4 L4.7 11.1Z M8.3 2.5 L10.9 5.1" fill="none" stroke="#5d8ef0" stroke-width="1"/></svg>
<div class="a" style="left:1504px;top:534px;width:32px;height:24px;border:1px solid #ee4f7c;border-radius:3.5px;background:#fff"></div>
<svg style="left:1510px;top:536px" width="20" height="20" viewBox="0 0 20 20"><path d="M7.5 2.3 H12.5" stroke="#f03a6c" stroke-width="1.1"/><path d="M3 4.6 H17" stroke="#f03a6c" stroke-width="1.4"/><path d="M4.6 4.6 V15.8 C4.6 16.9 5.3 17.6 6.4 17.6 H13.6 C14.7 17.6 15.4 16.9 15.4 15.8 V4.6" fill="none" stroke="#f03a6c" stroke-width="1.4"/><path d="M8.4 7.4 V14.4 M11.6 7.4 V14.4" stroke="#f03a6c" stroke-width="1.2"/></svg>
<div class="a" style="left:1444px;top:613px;width:100px;height:1px;background:#e4e7eb"></div>
<div class="a" style="left:1454px;top:579px;width:32px;height:24px;border:1px solid #5d8ef0;border-radius:3.5px;background:#fff"></div>
<svg style="left:1463px;top:585px" width="14" height="13" viewBox="0 0 14 13"><path d="M1.5 11.5 L2.2 8.6 L9.3 1.5 C9.9 0.9 10.7 0.9 11.3 1.5 L11.8 2 C12.4 2.6 12.4 3.4 11.8 4 L4.7 11.1Z M8.3 2.5 L10.9 5.1" fill="none" stroke="#5d8ef0" stroke-width="1"/></svg>
<div class="a" style="left:1504px;top:579px;width:32px;height:24px;border:1px solid #ee4f7c;border-radius:3.5px;background:#fff"></div>
<svg style="left:1510px;top:581px" width="20" height="20" viewBox="0 0 20 20"><path d="M7.5 2.3 H12.5" stroke="#f03a6c" stroke-width="1.1"/><path d="M3 4.6 H17" stroke="#f03a6c" stroke-width="1.4"/><path d="M4.6 4.6 V15.8 C4.6 16.9 5.3 17.6 6.4 17.6 H13.6 C14.7 17.6 15.4 16.9 15.4 15.8 V4.6" fill="none" stroke="#f03a6c" stroke-width="1.4"/><path d="M8.4 7.4 V14.4 M11.6 7.4 V14.4" stroke="#f03a6c" stroke-width="1.2"/></svg>
<div class="a" style="left:1444px;top:658px;width:100px;height:1px;background:#e4e7eb"></div>
<div class="a" style="left:1454px;top:624px;width:32px;height:24px;border:1px solid #5d8ef0;border-radius:3.5px;background:#fff"></div>
<svg style="left:1463px;top:630px" width="14" height="13" viewBox="0 0 14 13"><path d="M1.5 11.5 L2.2 8.6 L9.3 1.5 C9.9 0.9 10.7 0.9 11.3 1.5 L11.8 2 C12.4 2.6 12.4 3.4 11.8 4 L4.7 11.1Z M8.3 2.5 L10.9 5.1" fill="none" stroke="#5d8ef0" stroke-width="1"/></svg>
<div class="a" style="left:1504px;top:624px;width:32px;height:24px;border:1px solid #ee4f7c;border-radius:3.5px;background:#fff"></div>
<svg style="left:1510px;top:626px" width="20" height="20" viewBox="0 0 20 20"><path d="M7.5 2.3 H12.5" stroke="#f03a6c" stroke-width="1.1"/><path d="M3 4.6 H17" stroke="#f03a6c" stroke-width="1.4"/><path d="M4.6 4.6 V15.8 C4.6 16.9 5.3 17.6 6.4 17.6 H13.6 C14.7 17.6 15.4 16.9 15.4 15.8 V4.6" fill="none" stroke="#f03a6c" stroke-width="1.4"/><path d="M8.4 7.4 V14.4 M11.6 7.4 V14.4" stroke="#f03a6c" stroke-width="1.2"/></svg>
<div class="a" style="left:1444px;top:703px;width:100px;height:1px;background:#e4e7eb"></div>
<div class="a" style="left:1454px;top:669px;width:32px;height:24px;border:1px solid #5d8ef0;border-radius:3.5px;background:#fff"></div>
<svg style="left:1463px;top:675px" width="14" height="13" viewBox="0 0 14 13"><path d="M1.5 11.5 L2.2 8.6 L9.3 1.5 C9.9 0.9 10.7 0.9 11.3 1.5 L11.8 2 C12.4 2.6 12.4 3.4 11.8 4 L4.7 11.1Z M8.3 2.5 L10.9 5.1" fill="none" stroke="#5d8ef0" stroke-width="1"/></svg>
<div class="a" style="left:1504px;top:669px;width:32px;height:24px;border:1px solid #ee4f7c;border-radius:3.5px;background:#fff"></div>
<svg style="left:1510px;top:671px" width="20" height="20" viewBox="0 0 20 20"><path d="M7.5 2.3 H12.5" stroke="#f03a6c" stroke-width="1.1"/><path d="M3 4.6 H17" stroke="#f03a6c" stroke-width="1.4"/><path d="M4.6 4.6 V15.8 C4.6 16.9 5.3 17.6 6.4 17.6 H13.6 C14.7 17.6 15.4 16.9 15.4 15.8 V4.6" fill="none" stroke="#f03a6c" stroke-width="1.4"/><path d="M8.4 7.4 V14.4 M11.6 7.4 V14.4" stroke="#f03a6c" stroke-width="1.2"/></svg>
<div class="a" style="left:1454px;top:714px;width:32px;height:24px;border:1px solid #5d8ef0;border-radius:3.5px;background:#fff"></div>
<svg style="left:1463px;top:720px" width="14" height="13" viewBox="0 0 14 13"><path d="M1.5 11.5 L2.2 8.6 L9.3 1.5 C9.9 0.9 10.7 0.9 11.3 1.5 L11.8 2 C12.4 2.6 12.4 3.4 11.8 4 L4.7 11.1Z M8.3 2.5 L10.9 5.1" fill="none" stroke="#5d8ef0" stroke-width="1"/></svg>
<div class="a" style="left:1504px;top:714px;width:32px;height:24px;border:1px solid #ee4f7c;border-radius:3.5px;background:#fff"></div>
<svg style="left:1510px;top:716px" width="20" height="20" viewBox="0 0 20 20"><path d="M7.5 2.3 H12.5" stroke="#f03a6c" stroke-width="1.1"/><path d="M3 4.6 H17" stroke="#f03a6c" stroke-width="1.4"/><path d="M4.6 4.6 V15.8 C4.6 16.9 5.3 17.6 6.4 17.6 H13.6 C14.7 17.6 15.4 16.9 15.4 15.8 V4.6" fill="none" stroke="#f03a6c" stroke-width="1.4"/><path d="M8.4 7.4 V14.4 M11.6 7.4 V14.4" stroke="#f03a6c" stroke-width="1.2"/></svg>
<div class="a" style="left:1544px;top:433px;width:10px;height:305px;background:#c7c7c7"></div>
<div class="a" style="left:1545px;top:433px;width:9px;height:295px;border-radius:5px;background:#21707f"></div>
<div class="a" style="left:1554px;top:393px;width:1px;height:345px;background:#e1e4e9"></div>
<div class="a" style="left:1590px;top:0;width:10px;height:738px;background:#bbbbbb"></div>
<div class="a" style="left:1590px;top:0;width:10px;height:617px;border-radius:5px;background:#22717f"></div>
<svg style="left:0;top:0" width="1600" height="738" viewBox="0 0 1600 738">
<defs><filter id="sh" x="-20%" y="-20%" width="140%" height="140%"><feDropShadow dx="1.5" dy="2" stdDeviation="1.8" flood-color="#000" flood-opacity="0.5"/></filter></defs>
<g filter="url(#sh)"><path d="M1347 550 L1440 491" stroke="#f5a70f" stroke-width="8.5" stroke-linecap="round"/>
<path d="M1463 476.5 L1430 480 L1446 504.5Z" fill="#f5a70f" stroke="#f5a70f" stroke-width="1.5" stroke-linejoin="round"/></g>
</svg>
</body></html>
